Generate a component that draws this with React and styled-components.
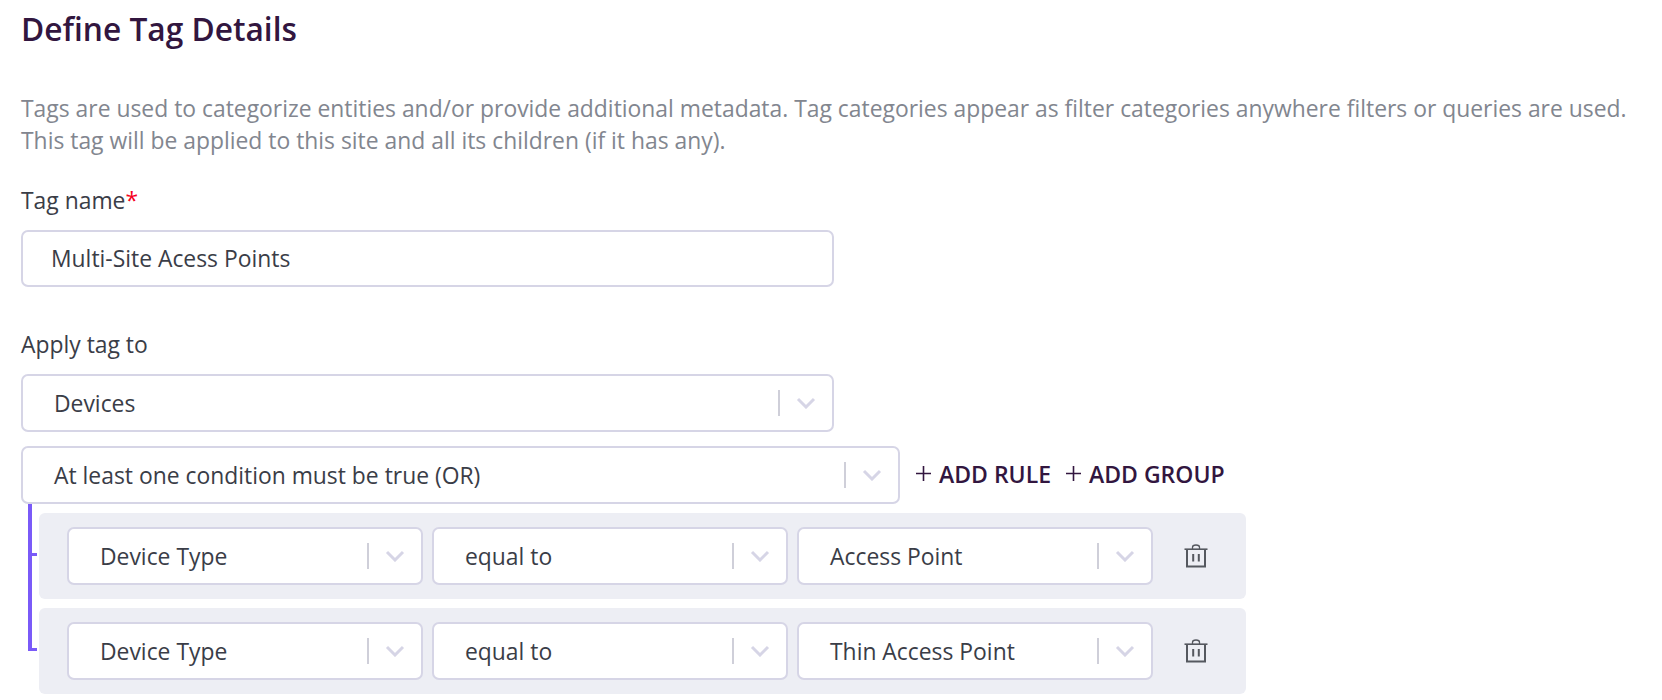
import React from "react";
import styled, { createGlobalStyle } from "styled-components";

const Global = createGlobalStyle`
  html, body { margin: 0; padding: 0; background: #fff; overflow: hidden; }
  body { font-family: "Open Sans", "Liberation Sans", sans-serif; color: #3a3d47; }
`;

const Page = styled.div`
  width: 1662px;
  height: 700px;
  padding: 9px 0 0 21px;
  box-sizing: border-box;
  overflow: hidden;
`;
const Title = styled.h1`
  margin: 0;
  font-size: 31.7px;
  line-height: 40px;
  font-weight: 600;
  color: #32163f;
`;
const Description = styled.p`
  margin: 44px 0 0;
  font-size: 22.88px;
  line-height: 32px;
  color: #82868f;
  white-space: nowrap;
`;
const Label = styled.div`
  font-size: 22.88px;
  line-height: 30px;
  margin-top: ${(p) => p.$top}px;
  margin-bottom: 14px;
  color: #3a3d47;
`;
const Required = styled.span`
  color: #f5001e;
`;
const TextBox = styled.div`
  width: 813px;
  height: 57px;
  box-sizing: border-box;
  border: 2px solid #d6d5e6;
  border-radius: 7px;
  padding-left: 28px;
  display: flex;
  align-items: center;
  font-size: 22.88px;
`;
const SelectBox = styled.div`
  width: ${(p) => p.$width}px;
  height: 58px;
  flex: none;
  box-sizing: border-box;
  background: #fff;
  border: 2px solid #d6d5e6;
  border-radius: 7px;
  padding-left: 31px;
  display: flex;
  align-items: center;
  font-size: 22.88px;
`;
const SelectValue = styled.span`
  flex: 1;
`;
const Separator = styled.span`
  width: 2px;
  height: 26px;
  background: #cfcfd9;
`;
const ChevronSlot = styled.span`
  width: 52px;
  display: flex;
  justify-content: center;
  color: #d6d5e6;
`;
const GroupHeader = styled.div`
  display: flex;
  align-items: center;
  margin-top: 14px;
`;
const AddButton = styled.div`
  display: flex;
  align-items: center;
  gap: 8px;
  margin-left: ${(p) => p.$left}px;
  padding-bottom: 3px;
  font-size: 23px;
  font-weight: 600;
  color: #32163f;
  white-space: nowrap;
`;
const RuleList = styled.div`
  position: relative;
  width: 1225px;
  box-sizing: border-box;
  padding: 9px 0 0 18px;
  display: flex;
  flex-direction: column;
  gap: 9px;
  &::before {
    content: "";
    position: absolute;
    left: 7px;
    top: 0;
    width: 4px;
    height: 147px;
    background: #7a5af8;
  }
`;
const RuleRow = styled.div`
  position: relative;
  height: 86px;
  background: #edeef4;
  border-radius: 6px;
  padding: 0 0 0 28px;
  display: flex;
  align-items: center;
  gap: 9px;
  &::before {
    content: "";
    position: absolute;
    left: -11px;
    top: 40px;
    width: 9px;
    height: 3px;
    background: #7a5af8;
  }
`;
const TrashButton = styled.span`
  width: 68px;
  display: flex;
  justify-content: center;
  color: #55585f;
`;

const Chevron = () => (
  <svg width="20" height="12" viewBox="0 0 20 12" fill="none">
    <path d="M2 2l8 8 8-8" stroke="currentColor" strokeWidth="3" />
  </svg>
);
const Plus = () => (
  <svg width="15" height="15" viewBox="0 0 15 15" fill="none">
    <path d="M7.5 0v15M0 7.5h15" stroke="#32163f" strokeWidth="1.6" />
  </svg>
);
const Trash = () => (
  <svg width="24" height="24" viewBox="0 0 24 24" fill="none" stroke="currentColor">
    <path d="M0.5 5.2h23" strokeWidth="1.6" />
    <path d="M3 5.5V22.4h18V5.5" strokeWidth="2" />
    <path d="M8.5 5V3.2C8.5 1.8 10 1 12 1s3.5.8 3.5 2.2V5" strokeWidth="1.3" />
    <path d="M9.2 10v7.5M14.8 10v7.5" strokeWidth="2" />
  </svg>
);

const Select = ({ width, children }) => (
  <SelectBox $width={width}>
    <SelectValue>{children}</SelectValue>
    <Separator />
    <ChevronSlot>
      <Chevron />
    </ChevronSlot>
  </SelectBox>
);

const Rule = ({ value }) => (
  <RuleRow>
    <Select width={356}>Device Type</Select>
    <Select width={356}>equal to</Select>
    <Select width={356}>{value}</Select>
    <TrashButton>
      <Trash />
    </TrashButton>
  </RuleRow>
);

export default function App() {
  return (
    <Page>
      <Global />
      <Title>Define Tag Details</Title>
      <Description>
        Tags are used to categorize entities and/or provide additional metadata. Tag categories appear as filter categories anywhere filters or queries are used.
        <br />
        This tag will be applied to this site and all its children (if it has any).
      </Description>
      <Label $top={29}>
        Tag name<Required>*</Required>
      </Label>
      <TextBox>Multi-Site Acess Points</TextBox>
      <Label $top={43}>Apply tag to</Label>
      <Select width={813}>Devices</Select>
      <GroupHeader>
        <Select width={879}>At least one condition must be true (OR)</Select>
        <AddButton $left={16}>
          <Plus />
          ADD RULE
        </AddButton>
        <AddButton $left={15}>
          <Plus />
          ADD GROUP
        </AddButton>
      </GroupHeader>
      <RuleList>
        <Rule value="Access Point" />
        <Rule value="Thin Access Point" />
      </RuleList>
    </Page>
  );
}
